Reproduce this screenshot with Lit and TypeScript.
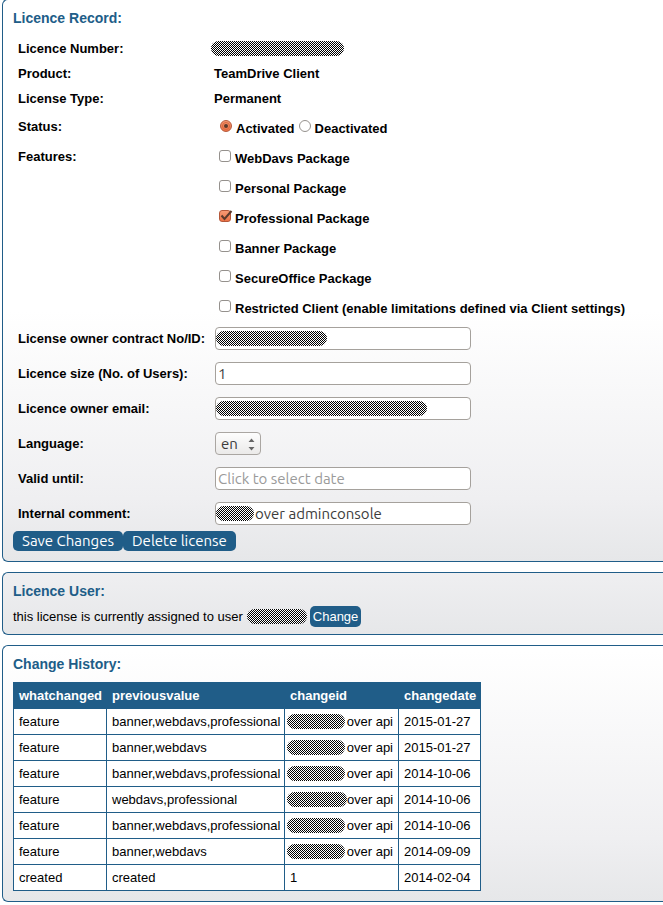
import { LitElement, html, css } from "lit";
import { customElement } from "lit/decorators.js";

interface Feature {
  id: string;
  label: string;
  on?: boolean;
}

interface Change {
  what: string;
  previous: string;
  by: string;
  date: string;
  mask?: "short" | "long";
}

const FEATURES: Feature[] = [
  { id: "webdavs", label: "WebDavs Package" },
  { id: "personal", label: "Personal Package" },
  { id: "professional", label: "Professional Package", on: true },
  { id: "banner", label: "Banner Package" },
  { id: "secureoffice", label: "SecureOffice Package" },
  { id: "restricted", label: "Restricted Client (enable limitations defined via Client settings)" },
];

const CHANGES: Change[] = [
  { what: "feature", previous: "banner,webdavs,professional", by: "over api", date: "2015-01-27", mask: "short" },
  { what: "feature", previous: "banner,webdavs", by: "over api", date: "2015-01-27", mask: "short" },
  { what: "feature", previous: "banner,webdavs,professional", by: "over api", date: "2014-10-06", mask: "short" },
  { what: "feature", previous: "webdavs,professional", by: "over api", date: "2014-10-06", mask: "long" },
  { what: "feature", previous: "banner,webdavs,professional", by: "over api", date: "2014-10-06", mask: "short" },
  { what: "feature", previous: "banner,webdavs", by: "over api", date: "2014-09-09", mask: "short" },
  { what: "created", previous: "created", by: "1", date: "2014-02-04" },
];

@customElement("app-root")
export class AppRoot extends LitElement {
  static styles = css`
    :host {
      --blue: #205d88;
      --ui: "Ubuntu", "Noto Sans", sans-serif;
      display: flow-root;
      overflow: hidden;
      background: #fff;
      color: #000;
      font: 13px/20px "Liberation Sans", Arial, sans-serif;
    }
    *, *::before { box-sizing: border-box; }
    .page { display: flex; flex-direction: column; gap: 10px; margin: -1px 0 3px 2px; }
    .panel {
      border: 1px solid var(--blue);
      border-right: 0;
      border-radius: 6px 0 0 6px;
      padding: 8px 10px 10px;
      background: linear-gradient(#fff, #efeff1 75%, #e6e7e9) bottom / 100% 250px no-repeat #fff;
    }
    .panel.user { padding-bottom: 7px; }
    h2 { margin: 0 0 8px; font-size: 14px; line-height: 20px; font-weight: bold; color: var(--blue); }
    .user h2 { margin-bottom: 5px; }
    .form { display: grid; grid-template-columns: 196px 1fr; padding-left: 5px; font-weight: bold; }
    .name { line-height: 25px; white-space: nowrap; }
    .value { display: flex; align-items: center; height: 25px; }
    .name.choice { height: 30px; line-height: 32px; }
    .choices { display: flex; padding-left: 5px; }
    .choices.column { flex-direction: column; }
    .choices label { display: flex; align-items: center; height: 30px; gap: 4px; white-space: nowrap; }
    .caption { padding-top: 5px; }
    .status { gap: 4px; padding-left: 6px; }
    .name.entry { line-height: 35px; }
    .field { display: flex; align-items: center; height: 35px; padding-left: 1px; position: relative; }
    .text {
      width: 256px;
      height: 23px;
      border: 1px solid #a5a19c;
      border-radius: 4px;
      padding: 0 2px;
      background: #fff;
      color: #3c3c3c;
      font: 15px/20px var(--ui);
      outline: 0;
    }
    .text::placeholder { color: #9a9a9a; opacity: 1; }
    .text.after { padding-left: 39px; }
    .select { position: relative; display: flex; }
    select {
      appearance: none;
      width: 46px;
      height: 23px;
      border: 1px solid #aaa6a2;
      border-radius: 4px;
      padding: 0 5px;
      background: linear-gradient(#fdfdfd, #ebeae9);
      color: #3c3c3c;
      font: 15px/20px var(--ui);
    }
    .arrows { position: absolute; right: 6px; top: 6px; pointer-events: none; }
    .box { position: relative; display: flex; width: 12px; height: 12px; flex: none; }
    .box input {
      appearance: none;
      width: 12px;
      height: 12px;
      margin: 0;
      border: 1px solid #95918d;
      border-radius: 3px;
      background: #fff;
    }
    .box input[type="radio"] { border-radius: 50%; }
    .box input:checked { background: linear-gradient(#f79a75, #ec7245); border-color: #b5583a; }
    .box svg { position: absolute; left: 0; top: 0; pointer-events: none; overflow: visible; }
    .mask {
      display: block;
      flex: none;
      height: 15px;
      border-radius: 8px;
      background: repeating-conic-gradient(#000 0 25%, #fff 0 50%) 0 0 / 2px 2px;
    }
    .over { position: absolute; top: 10px; left: 2px; }
    .number { width: 133px; margin-left: -3px; }
    .contract { width: 111px; }
    .email { width: 211px; }
    .comment { width: 38px; }
    .assignee { width: 60px; margin-left: 4px; }
    .short { width: 58px; }
    .long { width: 60px; }
    .actions { display: flex; }
    button {
      border: 0;
      border-radius: 5px;
      background: var(--blue);
      color: #fff;
      cursor: pointer;
      white-space: nowrap;
    }
    .action { height: 20px; padding: 0 9px; font: 15px/20px var(--ui); }
    .change { height: 21px; padding: 0 3px; margin-left: 3px; font: 13px/20px "Liberation Sans", Arial, sans-serif; }
    .assigned { display: flex; align-items: center; height: 21px; }
    table { border-collapse: collapse; width: 468px; table-layout: fixed; background: #fff; }
    .c1 { width: 93px; }
    .c2 { width: 178px; }
    .c3 { width: 114px; }
    .c4 { width: 82px; }
    th, td {
      height: 26px;
      padding: 0 5px;
      border: 1px solid var(--blue);
      text-align: left;
      white-space: nowrap;
    }
    th { background: var(--blue); color: #fff; }
    .by { display: flex; align-items: center; justify-content: space-between; margin-left: -3px; }
  `;

  private feature(f: Feature) {
    return html`<label>
      <span class="box"><input type="checkbox" name=${f.id} ?checked=${f.on} />${f.on
        ? html`<svg width="13" height="12" viewBox="0 0 13 12">
            <path d="M2.5 5.5 L5.5 9 L12.5 1" fill="none" stroke="#5b3a2c" stroke-width="2" />
          </svg>`
        : ""}</span>
      <span class="caption">${f.label}</span>
    </label>`;
  }

  render() {
    return html`<main class="page">
      <section class="panel">
        <h2>Licence Record:</h2>
        <div class="form">
          <div class="name">Licence Number:</div>
          <div class="value"><span class="mask number"></span></div>
          <div class="name">Product:</div>
          <div class="value">TeamDrive Client</div>
          <div class="name">License Type:</div>
          <div class="value">Permanent</div>
          <div class="name choice">Status:</div>
          <div class="choices status">
            <label>
              <span class="box"><input type="radio" name="status" checked />
                <svg width="12" height="12" viewBox="0 0 12 12">
                  <circle cx="6" cy="6" r="3.5" fill="none" stroke="#d9683f" />
                  <circle cx="6" cy="6" r="2" fill="#5b3a2c" />
                </svg></span>
              <span class="caption">Activated</span>
            </label>
            <label>
              <span class="box"><input type="radio" name="status" /></span>
              <span class="caption">Deactivated</span>
            </label>
          </div>
          <div class="name choice">Features:</div>
          <div class="choices column">${FEATURES.map((f) => this.feature(f))}</div>
          <label class="name entry" for="contract">License owner contract No/ID:</label>
          <div class="field"><input class="text" id="contract" /><span class="mask over contract"></span></div>
          <label class="name entry" for="size">Licence size (No. of Users):</label>
          <div class="field"><input class="text" id="size" value="1" /></div>
          <label class="name entry" for="email">Licence owner email:</label>
          <div class="field"><input class="text" id="email" /><span class="mask over email"></span></div>
          <label class="name entry" for="language">Language:</label>
          <div class="field">
            <span class="select">
              <select id="language"><option>en</option></select>
              <svg class="arrows" width="7" height="13" viewBox="0 0 7 13">
                <path d="M0.5 4 L3.5 0.5 L6.5 4 Z M0.5 9 L3.5 12.5 L6.5 9 Z" fill="#666" />
              </svg>
            </span>
          </div>
          <label class="name entry" for="valid">Valid until:</label>
          <div class="field"><input class="text" id="valid" placeholder="Click to select date" /></div>
          <label class="name entry" for="comment">Internal comment:</label>
          <div class="field">
            <input class="text after" id="comment" value="over adminconsole" /><span class="mask over comment"></span>
          </div>
        </div>
        <div class="actions">
          <button class="action">Save Changes</button><button class="action">Delete license</button>
        </div>
      </section>

      <section class="panel user">
        <h2>Licence User:</h2>
        <div class="assigned">
          <span>this license is currently assigned to user</span>
          <span class="mask assignee"></span>
          <button class="change">Change</button>
        </div>
      </section>

      <section class="panel">
        <h2>Change History:</h2>
        <table>
          <colgroup><col class="c1" /><col class="c2" /><col class="c3" /><col class="c4" /></colgroup>
          <thead>
            <tr><th>whatchanged</th><th>previousvalue</th><th>changeid</th><th>changedate</th></tr>
          </thead>
          <tbody>
            ${CHANGES.map(
              (c) => html`<tr>
                <td>${c.what}</td>
                <td>${c.previous}</td>
                <td>${c.mask
                  ? html`<div class="by"><span class="mask ${c.mask}"></span><span>${c.by}</span></div>`
                  : c.by}</td>
                <td>${c.date}</td>
              </tr>`
            )}
          </tbody>
        </table>
      </section>
    </main>`;
  }
}
